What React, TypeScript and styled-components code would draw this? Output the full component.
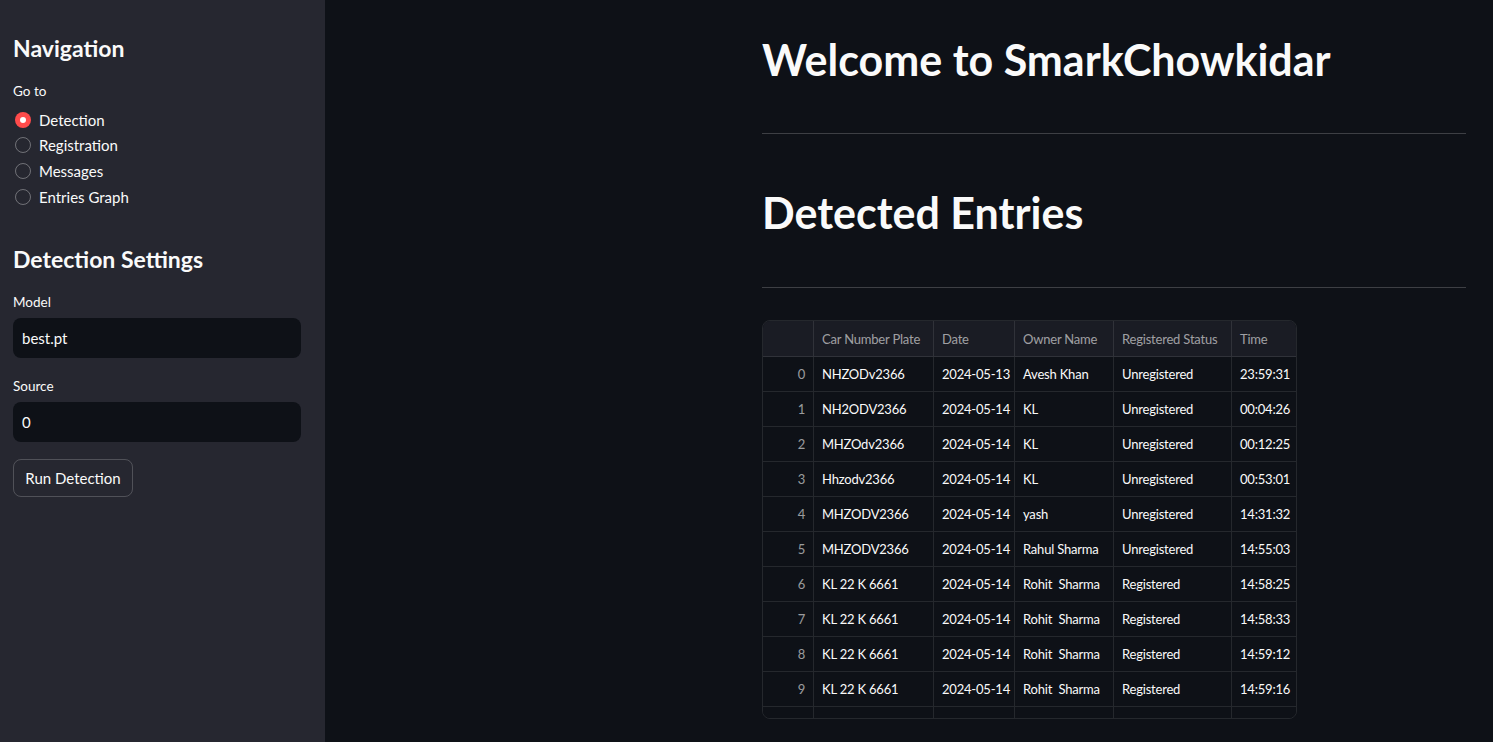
import React from "react";
import styled, { createGlobalStyle } from "styled-components";

const GlobalStyle = createGlobalStyle`
  html, body { margin: 0; padding: 0; background: #0e1117; }
  body {
    font-family: "Source Sans Pro", Lato, "Noto Sans", sans-serif;
    color: #fafafa;
  }
  * { box-sizing: border-box; }
`;

const Page = styled.div`
  display: flex;
  width: 100%;
  height: 100vh;
  overflow: hidden;
`;

const Sidebar = styled.aside`
  width: 325px;
  flex: none;
  background: #262730;
  padding: 32px 24px 0 13px;
  display: flex;
  flex-direction: column;
`;

const SideHeading = styled.h2<{ $mt?: number }>`
  margin: ${(p) => p.$mt ?? 0}px 0 0;
  font-size: 23px;
  line-height: 32px;
  font-weight: 700;
  color: #fafafa;
`;

const FieldLabel = styled.div<{ $mt: number }>`
  margin-top: ${(p) => p.$mt}px;
  font-size: 13.5px;
  line-height: 20px;
  color: #fafafa;
`;

const RadioGroup = styled.div`
  margin-top: 6px;
  display: flex;
  flex-direction: column;
`;

const RadioRow = styled.label`
  display: flex;
  align-items: center;
  gap: 8px;
  height: 25.67px;
  padding-left: 2px;
  font-size: 15px;
  color: #fafafa;
`;

const RadioDot = styled.span<{ $checked?: boolean }>`
  width: 16px;
  height: 16px;
  border-radius: 50%;
  flex: none;
  display: flex;
  align-items: center;
  justify-content: center;
  background: ${(p) => (p.$checked ? "#ff4b4b" : "transparent")};
  border: ${(p) => (p.$checked ? "none" : "1px solid rgba(250,250,250,0.35)")};
  &::after {
    content: "";
    display: ${(p) => (p.$checked ? "block" : "none")};
    width: 6px;
    height: 6px;
    border-radius: 50%;
    background: #fff;
  }
`;

const TextInput = styled.div`
  margin-top: 6px;
  height: 40px;
  width: 288px;
  border-radius: 8px;
  background: #0e1117;
  display: flex;
  align-items: center;
  padding: 0 9px;
  font-size: 15px;
  color: #fafafa;
`;

const Button = styled.button`
  margin-top: 17px;
  align-self: flex-start;
  height: 38px;
  width: 120px;
  padding: 0;
  border-radius: 8px;
  border: 1px solid rgba(250, 250, 250, 0.2);
  background: transparent;
  color: #fafafa;
  font-family: inherit;
  font-size: 15px;
`;

const Main = styled.main`
  flex: 1;
  padding: 33px 27px 0 437px;
  display: flex;
  flex-direction: column;
`;

const Title = styled.h1<{ $mt?: number }>`
  margin: ${(p) => p.$mt ?? 0}px 0 0;
  font-size: 43px;
  line-height: 53px;
  font-weight: 700;
  color: #fafafa;
`;

const Divider = styled.hr<{ $mt: number }>`
  margin: ${(p) => p.$mt}px 0 0;
  border: none;
  height: 1px;
  background: rgba(250, 250, 250, 0.2);
`;

const TableFrame = styled.div`
  margin-top: 32px;
  width: 535px;
  height: 399px;
  border: 1px solid rgba(250, 250, 250, 0.1);
  border-radius: 8px;
  overflow: hidden;
`;

const cols = "50px 120px 81px 99px 118px 66px";

const Row = styled.div<{ $head?: boolean }>`
  display: grid;
  grid-template-columns: ${cols};
  height: ${(p) => (p.$head ? 36 : 35)}px;
  background: ${(p) => (p.$head ? "#1a1c24" : "#0e1117")};
  border-bottom: 1px solid rgba(250, 250, 250, 0.1);
`;

const Cell = styled.div<{ $head?: boolean; $index?: boolean }>`
  display: flex;
  align-items: center;
  justify-content: ${(p) => (p.$index ? "flex-end" : "flex-start")};
  padding: ${(p) => (p.$index ? "0 8px" : "0 3px 0 8px")};
  font-size: 13px;
  letter-spacing: -0.2px;
  white-space: pre;
  overflow: hidden;
  color: ${(p) => (p.$head || p.$index ? "rgba(250,250,250,0.6)" : "#fafafa")};
  & + & { border-left: 1px solid rgba(250, 250, 250, 0.1); }
`;

const headers = ["", "Car Number Plate", "Date", "Owner Name", "Registered Status", "Time"];

const rows: string[][] = [
  ["NHZODv2366", "2024-05-13", "Avesh Khan", "Unregistered", "23:59:31"],
  ["NH2ODV2366", "2024-05-14", "KL", "Unregistered", "00:04:26"],
  ["MHZOdv2366", "2024-05-14", "KL", "Unregistered", "00:12:25"],
  ["Hhzodv2366", "2024-05-14", "KL", "Unregistered", "00:53:01"],
  ["MHZODV2366", "2024-05-14", "yash", "Unregistered", "14:31:32"],
  ["MHZODV2366", "2024-05-14", "Rahul Sharma", "Unregistered", "14:55:03"],
  ["KL 22 K 6661", "2024-05-14", "Rohit  Sharma", "Registered", "14:58:25"],
  ["KL 22 K 6661", "2024-05-14", "Rohit  Sharma", "Registered", "14:58:33"],
  ["KL 22 K 6661", "2024-05-14", "Rohit  Sharma", "Registered", "14:59:12"],
  ["KL 22 K 6661", "2024-05-14", "Rohit  Sharma", "Registered", "14:59:16"],
];

const navItems = ["Detection", "Registration", "Messages", "Entries Graph"];

export default function App() {
  return (
    <>
      <GlobalStyle />
      <Page>
        <Sidebar>
          <SideHeading>Navigation</SideHeading>
          <FieldLabel $mt={17}>Go to</FieldLabel>
          <RadioGroup>
            {navItems.map((n, i) => (
              <RadioRow key={n}>
                <RadioDot $checked={i === 0} />
                {n}
              </RadioRow>
            ))}
          </RadioGroup>
          <SideHeading $mt={33}>Detection Settings</SideHeading>
          <FieldLabel $mt={17}>Model</FieldLabel>
          <TextInput>best.pt</TextInput>
          <FieldLabel $mt={18}>Source</FieldLabel>
          <TextInput>0</TextInput>
          <Button>Run Detection</Button>
        </Sidebar>
        <Main>
          <Title>Welcome to SmarkChowkidar</Title>
          <Divider $mt={47} />
          <Title $mt={52}>Detected Entries</Title>
          <Divider $mt={48} />
          <TableFrame>
            <Row $head>
              {headers.map((h, i) => (
                <Cell key={i} $head>{h}</Cell>
              ))}
            </Row>
            {rows.map((r, i) => (
              <Row key={i}>
                <Cell $index>{i}</Cell>
                {r.map((c, j) => (
                  <Cell key={j}>{c}</Cell>
                ))}
              </Row>
            ))}
            <Row>
              {headers.map((_, i) => (
                <Cell key={i} />
              ))}
            </Row>
          </TableFrame>
        </Main>
      </Page>
    </>
  );
}
